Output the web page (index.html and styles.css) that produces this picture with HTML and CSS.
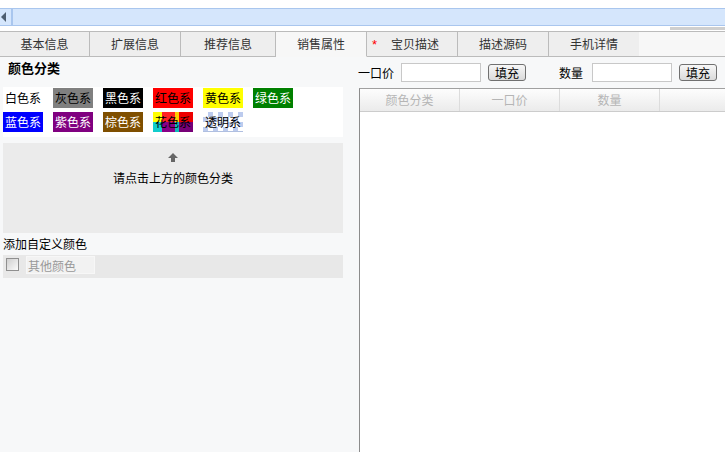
FILE: index.html
```html
<!DOCTYPE html>
<html lang="zh-CN">

<head>
    <meta charset="UTF-8">
    <title>销售属性</title>
    <link rel="stylesheet" href="styles.css">
</head>

<body>
    <div class="top-space"></div>

    <div class="nav-bar">
        <div class="nav-prev"><span class="arrow-left"></span></div>
        <div class="nav-track"></div>
    </div>
    <div class="scroll-row"><div class="scroll-thumb"></div></div>

    <ul class="tabs">
        <li class="tab">基本信息</li>
        <li class="tab">扩展信息</li>
        <li class="tab">推荐信息</li>
        <li class="tab active">销售属性</li>
        <li class="tab required"><span class="star">*</span>宝贝描述</li>
        <li class="tab">描述源码</li>
        <li class="tab">手机详情</li>
        <li class="tab-rest"></li>
    </ul>

    <div class="main">
        <!-- 颜色分类 -->
        <div class="left">
            <h3 class="title">颜色分类</h3>
            <div class="swatches">
                <div class="chip-row">
                    <span class="chip c-white">白色系</span>
                    <span class="chip c-gray">灰色系</span>
                    <span class="chip c-black">黑色系</span>
                    <span class="chip c-red">红色系</span>
                    <span class="chip c-yellow">黄色系</span>
                    <span class="chip c-green">绿色系</span>
                </div>
                <div class="chip-row">
                    <span class="chip c-blue">蓝色系</span>
                    <span class="chip c-purple">紫色系</span>
                    <span class="chip c-brown">棕色系</span>
                    <span class="chip c-multi">花色系</span>
                    <span class="chip c-clear">透明系</span>
                </div>
            </div>
            <div class="prompt">
                <svg class="up-arrow" width="10" height="9" viewBox="0 0 10 9">
                    <path d="M5 0 L10 5 L7 5 L7 9 L3 9 L3 5 L0 5 Z" fill="#666"/>
                </svg>
                <p>请点击上方的颜色分类</p>
            </div>
            <div class="custom-label">添加自定义颜色</div>
            <div class="custom-row">
                <span class="check"></span>
                <input class="custom-input" type="text" placeholder="其他颜色">
            </div>
        </div>

        <!-- 价格 / 数量 -->
        <div class="right">
            <div class="fill-row">
                <span class="lbl">一口价</span>
                <input class="fill-input" type="text">
                <button class="fill-btn">填充</button>
                <span class="lbl lbl-qty">数量</span>
                <input class="fill-input" type="text">
                <button class="fill-btn">填充</button>
            </div>
            <div class="sku-grid">
                <div class="grid-head">
                    <span>颜色分类</span>
                    <span>一口价</span>
                    <span>数量</span>
                    <span class="last"></span>
                </div>
                <div class="grid-body"></div>
            </div>
        </div>
    </div>
</body>

</html>
```

FILE: styles.css
```css
body {
    margin: 0;
    height: 452px;
    overflow: hidden;
    font-family: "Noto Sans CJK SC", "Liberation Sans", sans-serif;
    font-size: 12px;
    color: #000;
    background: #fff;
}

.top-space {
    height: 8px;
}

.nav-bar {
    display: flex;
    height: 16px;
    border-top: 1px solid #a9c6ee;
    border-bottom: 1px solid #a9c6ee;
    background: #d5e6fc;
}

.nav-prev {
    width: 11px;
    border-right: 2px solid #a9c6ee;
}

.arrow-left {
    display: block;
    width: 0;
    height: 0;
    margin: 3px 0 0 1px;
    border-top: 5px solid transparent;
    border-bottom: 5px solid transparent;
    border-right: 5px solid #4e5e70;
}

.nav-track {
    flex: 1;
}

.scroll-row {
    height: 5px;
    box-sizing: border-box;
    padding-top: 1px;
    display: flex;
    justify-content: flex-end;
}

.scroll-thumb {
    width: 55px;
    height: 3px;
    background: #cfcfcf;
}

/* tabs */
.tabs {
    margin: 0;
    padding: 0;
    list-style: none;
    display: flex;
    border-top: 1px solid #bbb;
    background: #f7f7f7;
}

.tab {
    box-sizing: border-box;
    flex-shrink: 0;
    width: 91px;
    height: 25px;
    line-height: 24px;
    text-align: center;
    color: #333;
    background: #eee;
    border-right: 1px solid #bbb;
    border-bottom: 1px solid #bbb;
    position: relative;
}

.tab:first-child {
    width: 90px;
}

.tab:nth-child(3) {
    width: 95px;
}

.tab:nth-child(7) {
    width: 90px;
    border-right: none;
}

.tab.active {
    background: #f7f7f7;
    border-bottom-color: #f7f7f7;
}

.tab.required {
    padding-left: 6px;
}

.star {
    position: absolute;
    left: 5px;
    top: 1px;
    color: #f00;
    font-family: "Liberation Sans", sans-serif;
    font-size: 13px;
}

.tab-rest {
    flex: 1;
    height: 25px;
    box-sizing: border-box;
    border-bottom: 1px solid #bbb;
}

.main {
    display: flex;
    height: 395px;
}

/* left column */
.left {
    flex: 0 0 357px;
    background: #f7f8f9;
}

.title {
    margin: 0;
    padding-left: 8px;
    height: 30px;
    line-height: 21px;
    font-size: 13px;
    font-weight: bold;
}

.swatches {
    width: 340px;
    margin-left: 3px;
    padding: 1px 0 5px;
    background: #fff;
}

.chip-row {
    display: flex;
    gap: 10px;
}

.chip-row + .chip-row {
    margin-top: 4px;
}

.chip {
    width: 40px;
    height: 20px;
    line-height: 20px;
    text-align: center;
    white-space: nowrap;
}

.c-white { background: #fff; }
.c-gray { background: #808080; }
.c-black { background: #000; color: #fff; }
.c-red { background: #f00; }
.c-yellow { background: #ff0; }
.c-green { background: #008000; color: #fff; }
.c-blue { background: #00f; color: #fff; }
.c-purple { background: #800080; color: #fff; }
.c-brown { background: #7f4f00; color: #fff; }

.c-multi {
    background:
        linear-gradient(90deg, #ff0 0 22%, #f22 22% 55%, #fc0 55% 66%, #e00 66%) top / 100% 50% no-repeat,
        linear-gradient(90deg, #1cc 0 22%, #808 22% 55%, #1bb 55% 66%, #707 66%) bottom / 100% 50% no-repeat;
}

.c-clear {
    box-sizing: border-box;
    border-bottom: 1px solid #b0bfe0;
    background-color: #fff;
    background-image:
        linear-gradient(45deg, #bccbee 25%, transparent 25%, transparent 75%, #bccbee 75%),
        linear-gradient(45deg, #bccbee 25%, transparent 25%, transparent 75%, #bccbee 75%);
    background-size: 10px 10px;
    background-position: 0 0, 5px 5px;
}

.prompt {
    width: 340px;
    height: 90px;
    margin: 6px 0 0 3px;
    padding-top: 10px;
    box-sizing: border-box;
    background: #ebebeb;
    text-align: center;
}

.up-arrow {
    display: block;
    margin: 0 auto;
}

.prompt p {
    margin: 7px 0 0;
    line-height: 18px;
}

.custom-label {
    padding-left: 3px;
    height: 22px;
    line-height: 22px;
}

.custom-row {
    width: 340px;
    height: 23px;
    margin-left: 3px;
    display: flex;
    align-items: flex-start;
    background: #e8e8e8;
}

.check {
    width: 13px;
    height: 13px;
    margin: 3px 0 0 3px;
    box-sizing: border-box;
    border: 1px solid #8f8f8f;
    background: linear-gradient(135deg, #cfcfcf, #fbfbfb);
}

.custom-input {
    width: 69px;
    height: 18px;
    margin: 1px 0 0 7px;
    padding: 0 1px;
    box-sizing: border-box;
    border: 1px solid #f7f7f7;
    background: #f2f2f2;
    font: 12px "Noto Sans CJK SC", sans-serif;
    color: #999;
}

.custom-input::placeholder {
    color: #999;
}

/* right column */
.right {
    flex: 1;
    min-width: 0;
    display: flex;
    flex-direction: column;
    background: #f7f8f9;
}

.fill-row {
    height: 31px;
    padding-left: 1px;
    display: flex;
    align-items: center;
}

.fill-row > * {
    flex-shrink: 0;
}

.lbl-qty {
    margin-left: 33px;
}

.fill-input {
    width: 80px;
    height: 19px;
    margin-left: 7px;
    box-sizing: border-box;
    border: 1px solid #c8c8c8;
    background: #fff;
}

.lbl-qty + .fill-input {
    margin-left: 9px;
}

.fill-btn {
    width: 38px;
    height: 17px;
    margin-left: 7px;
    padding: 0;
    border: 1px solid #707070;
    border-radius: 3px;
    background: linear-gradient(#f7f7f7, #dadada);
    font: 12px "Noto Sans CJK SC", sans-serif;
    line-height: 15px;
    color: #000;
}

.sku-grid {
    flex: 1;
    margin-left: 2px;
    display: flex;
    flex-direction: column;
    border-left: 1px solid #8c8c8c;
    border-top: 1px solid #a0a0a0;
    background: #fff;
}

.grid-head {
    display: flex;
    height: 23px;
    box-sizing: border-box;
    border-bottom: 1px solid #ccc;
    background: linear-gradient(#fdfdfd, #ebebeb);
}

.grid-head span {
    flex-shrink: 0;
    width: 100px;
    box-sizing: border-box;
    border-right: 1px solid #dcdcdc;
    line-height: 22px;
    text-align: center;
    color: #b5b5b5;
}

.grid-head .last {
    flex: 1;
    border-right: none;
}

.grid-body {
    flex: 1;
}
```
